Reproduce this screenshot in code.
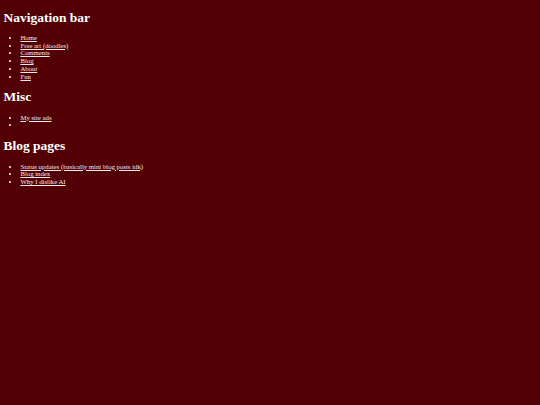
export default function App() {
  const nav = ["Home", "Free art (doodles)", "Comments", "Blog", "About", "Fun"];
  const blog = ["Status updates (basically mini blog posts idk)", "Blog index", "Why I dislike AI"];
  const h = "text-[13.5px] leading-[15.5px] font-bold my-[9px]";
  const ul = "list-disc pl-[17px] my-[9px] text-[6.75px] leading-[7.7px]";
  const a = "underline text-[#f5eaea]";
  return (
    <div className="min-h-[405px] w-[540px] bg-[#520006] text-white px-[3.4px] pt-[0.5px] pb-px" style={{ fontFamily: '"Liberation Serif", serif' }}>
      <h1 className={h}>Navigation bar</h1>
      <ul className={ul}>
        {nav.map((n) => (
          <li key={n}><a className={a}>{n}</a></li>
        ))}
      </ul>
      <h1 className={h}>Misc</h1>
      <ul className={ul}>
        <li><a className={a}>My site ads</a></li>
        <li className="h-[7.7px]"></li>
      </ul>
      <h1 className={h}>Blog pages</h1>
      <ul className={ul}>
        {blog.map((n) => (
          <li key={n}><a className={a}>{n}</a></li>
        ))}
      </ul>
    </div>
  );
}
